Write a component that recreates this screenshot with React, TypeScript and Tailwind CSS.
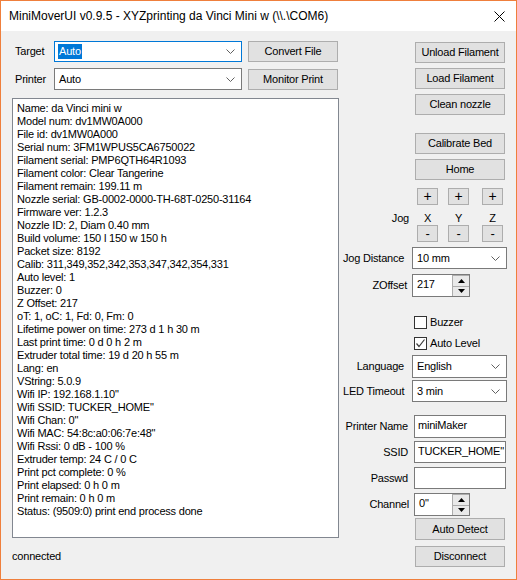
import React from "react";

const font = { fontFamily: '"Liberation Sans", Arial, sans-serif', letterSpacing: "-0.2px" };

function Chevron() {
  return (
    <svg width="9" height="5" viewBox="0 0 9 5" className="shrink-0">
      <polyline points="0.5,0.5 4.5,4.5 8.5,0.5" fill="none" stroke="#606060" strokeWidth="1" />
    </svg>
  );
}

function Btn({ children, className = "" }: { children: React.ReactNode; className?: string }) {
  return (
    <div
      className={
        "flex items-center justify-center border border-[#adadad] bg-[#e1e1e1] text-[11px] leading-[13px] text-black " +
        className
      }
    >
      {children}
    </div>
  );
}

function Combo({
  value,
  className = "",
  focused = false,
}: {
  value: string;
  className?: string;
  focused?: boolean;
}) {
  return (
    <div
      className={
        "flex items-center justify-between bg-white border pl-[3px] pr-[6px] " +
        (focused ? "border-[#0078d7] " : "border-[#7a7a7a] ") +
        className
      }
    >
      {focused ? (
        <span className="bg-[#0078d7] text-white text-[11px] leading-[15px] px-[1px]">{value}</span>
      ) : (
        <span className="text-[11px] leading-[13px] pl-[1px]">{value}</span>
      )}
      <Chevron />
    </div>
  );
}

function TextBox({ value, className = "" }: { value: string; className?: string }) {
  return (
    <div className={"flex items-center bg-white border border-[#7a7a7a] pl-[3px] " + className}>
      <span className="text-[11px] leading-[13px] -mt-[2px] whitespace-nowrap">{value}</span>
    </div>
  );
}

function Spin({ value, className = "" }: { value: string; className?: string }) {
  return (
    <div className={"flex bg-white border border-[#7a7a7a] " + className}>
      <div className="flex-1 flex items-center pl-[4px]">
        <span className="text-[11px] leading-[13px] -mt-[2px]">{value}</span>
      </div>
      <div className="w-[17px] flex flex-col">
        <div className="flex-1 flex items-center justify-center border border-[#adadad] bg-[#e9e9e9] border-b-0 border-r-0">
          <svg width="7" height="4" viewBox="0 0 7 4">
            <polygon points="0,4 7,4 3.5,0" fill="#000" />
          </svg>
        </div>
        <div className="flex-1 flex items-center justify-center border border-[#adadad] bg-[#e9e9e9] border-r-0 border-b-0">
          <svg width="7" height="4" viewBox="0 0 7 4">
            <polygon points="0,0 7,0 3.5,4" fill="#000" />
          </svg>
        </div>
      </div>
    </div>
  );
}

function Label({ children, pr = "pr-[7px]" }: { children: React.ReactNode; pr?: string }) {
  return (
    <div className={"w-[69px] text-right text-[11px] leading-[13px] whitespace-nowrap " + pr}>{children}</div>
  );
}

const lines = [
  "Name: da Vinci mini w",
  "Model num: dv1MW0A000",
  "File id: dv1MW0A000",
  "Serial num: 3FM1WPUS5CA6750022",
  "Filament serial: PMP6QTH64R1093",
  "Filament color: Clear Tangerine",
  "Filament remain: 199.11 m",
  "Nozzle serial: GB-0002-0000-TH-68T-0250-31164",
  "Firmware ver: 1.2.3",
  "Nozzle ID: 2, Diam 0.40 mm",
  "Build volume: 150 l 150 w 150 h",
  "Packet size: 8192",
  "Calib: 311,349,352,342,353,347,342,354,331",
  "Auto level: 1",
  "Buzzer: 0",
  "Z Offset: 217",
  "oT: 1, oC: 1, Fd: 0, Fm: 0",
  "Lifetime power on time: 273 d 1 h 30 m",
  "Last print time: 0 d 0 h 2 m",
  "Extruder total time: 19 d 20 h 55 m",
  "Lang: en",
  "VString: 5.0.9",
  'Wifi IP: 192.168.1.10"',
  'Wifi SSID: TUCKER_HOME"',
  'Wifi Chan: 0"',
  'Wifi MAC: 54:8c:a0:06:7e:48"',
  "Wifi Rssi: 0 dB - 100 %",
  "Extruder temp: 24 C / 0 C",
  "Print pct complete: 0 %",
  "Print elapsed: 0 h 0 m",
  "Print remain: 0 h 0 m",
  "Status: (9509:0) print end process done",
];

export default function App() {
  return (
    <div
      className="w-[517px] h-[580px] box-border border border-[#ef7f3c] bg-[#f0f0f0] flex flex-col text-black overflow-hidden"
      style={font}
    >
      {/* Title bar */}
      <div className="h-[30px] bg-white flex items-center justify-between pl-[8px] pr-[11px] shrink-0">
        <span
          className="text-[12px] leading-[16px] -mt-[1px]"
          style={{ fontFamily: '"Segoe UI", "Liberation Sans", Arial, sans-serif', letterSpacing: "0px" }}
        >
          MiniMoverUI v0.9.5 - XYZprinting da Vinci Mini w (\\.\COM6)
        </span>
        <svg width="11" height="11" viewBox="0 0 11 11">
          <line x1="0.5" y1="0.5" x2="10.5" y2="10.5" stroke="#000" strokeWidth="1" />
          <line x1="10.5" y1="0.5" x2="0.5" y2="10.5" stroke="#000" strokeWidth="1" />
        </svg>
      </div>

      {/* Body */}
      <div className="flex flex-1">
        {/* Left column */}
        <div className="ml-[11px] w-[327px] flex flex-col">
          <div className="mt-[10px] flex items-center h-[21px]">
            <div className="w-[42px] pl-[3px] text-[11px] leading-[13px]">Target</div>
            <Combo value="Auto" focused className="w-[188px] h-[21px]" />
            <Btn className="ml-[6px] w-[90px] h-[21px]">Convert File</Btn>
          </div>
          <div className="mt-[6px] flex items-center h-[22px]">
            <div className="w-[42px] pl-[3px] text-[11px] leading-[13px]">Printer</div>
            <Combo value="Auto" className="w-[188px] h-[22px]" />
            <Btn className="ml-[6px] w-[90px] h-[21px]">Monitor Print</Btn>
          </div>
          <div className="mt-[8px] h-[440px] bg-white border border-[#828790] pl-[4px] pt-[3px]">
            {lines.map((l, i) => (
              <div key={i} className="text-[11px] leading-[13px] whitespace-nowrap">
                {l}
              </div>
            ))}
          </div>
          <div className="mt-[12px] text-[11px] leading-[13px]">connected</div>
        </div>

        {/* Right column */}
        <div className="ml-[4px] w-[164px] flex flex-col">
          <Btn className="mt-[11px] ml-[72px] w-[90px] h-[21px]">Unload Filament</Btn>
          <Btn className="mt-[5px] ml-[72px] w-[90px] h-[21px]">Load Filament</Btn>
          <Btn className="mt-[5px] ml-[72px] w-[90px] h-[21px]">Clean nozzle</Btn>
          <Btn className="mt-[18px] ml-[72px] w-[90px] h-[21px]">Calibrate Bed</Btn>
          <Btn className="mt-[5px] ml-[72px] w-[90px] h-[21px]">Home</Btn>

          <div className="mt-[8px] flex h-[17px]">
            <Btn className="ml-[74px] w-[21px] h-[17px] !text-[14px]">+</Btn>
            <Btn className="ml-[10px] w-[21px] h-[17px] !text-[14px]">+</Btn>
            <Btn className="ml-[13px] w-[21px] h-[17px] !text-[14px]">+</Btn>
          </div>
          <div className="flex h-[20px] pt-[7px] text-[11px] leading-[13px]">
            <div className="w-[66px] text-right">Jog</div>
            <div className="ml-[8px] w-[21px] text-center">X</div>
            <div className="ml-[10px] w-[21px] text-center">Y</div>
            <div className="ml-[13px] w-[21px] text-center">Z</div>
          </div>
          <div className="flex h-[17px]">
            <Btn className="ml-[74px] w-[21px] h-[17px] !text-[13px]">-</Btn>
            <Btn className="ml-[10px] w-[21px] h-[17px] !text-[13px]">-</Btn>
            <Btn className="ml-[13px] w-[21px] h-[17px] !text-[13px]">-</Btn>
          </div>

          <div className="mt-[5px] flex items-center h-[22px]">
            <Label pr="pr-[8px]">Jog Distance</Label>
            <Combo value="10 mm" className="w-[95px] h-[22px]" />
          </div>
          <div className="mt-[5px] flex items-center h-[23px]">
            <Label pr="pr-[5px]">ZOffset</Label>
            <Spin value="217" className="w-[58px] h-[23px]" />
          </div>

          <div className="mt-[19px] flex items-center h-[13px]">
            <div className="ml-[71px] w-[13px] h-[13px] border border-[#333] bg-white" />
            <span className="ml-[3px] text-[11px] leading-[13px]">Buzzer</span>
          </div>
          <div className="mt-[8px] flex items-center h-[13px]">
            <div className="ml-[71px] w-[13px] h-[13px] border border-[#333] bg-white flex items-center justify-center">
              <svg width="11" height="11" viewBox="0 0 11 11">
                <polyline points="1.5,5.5 4,8.5 9.5,1.5" fill="none" stroke="#3c3c3c" strokeWidth="1.2" />
              </svg>
            </div>
            <span className="ml-[3px] text-[11px] leading-[13px]">Auto Level</span>
          </div>

          <div className="mt-[5px] flex items-center h-[23px]">
            <Label pr="pr-[8px]">Language</Label>
            <Combo value="English" className="w-[95px] h-[23px]" />
          </div>
          <div className="mt-[2px] flex items-center h-[22px]">
            <Label pr="pr-[8px]">LED Timeout</Label>
            <Combo value="3 min" className="w-[95px] h-[22px]" />
          </div>

          <div className="mt-[13px] flex items-center h-[23px]">
            <Label pr="pr-[4px]">Printer Name</Label>
            <TextBox value="miniMaker" className="ml-[2px] w-[92px] h-[23px]" />
          </div>
          <div className="mt-[3px] flex items-center h-[22px]">
            <Label pr="pr-[4px]">SSID</Label>
            <TextBox value={'TUCKER_HOME"'} className="ml-[2px] w-[92px] h-[22px]" />
          </div>
          <div className="mt-[4px] flex items-center h-[22px]">
            <Label pr="pr-[4px]">Passwd</Label>
            <TextBox value="" className="ml-[2px] w-[92px] h-[22px]" />
          </div>
          <div className="mt-[4px] flex items-center h-[23px]">
            <Label pr="pr-[3px]">Channel</Label>
            <Spin value={'0"'} className="ml-[2px] w-[56px] h-[23px]" />
          </div>

          <Btn className="mt-[2px] ml-[72px] w-[90px] h-[22px]">Auto Detect</Btn>
          <Btn className="mt-[6px] ml-[72px] w-[90px] h-[21px]">Disconnect</Btn>
        </div>
      </div>
    </div>
  );
}
